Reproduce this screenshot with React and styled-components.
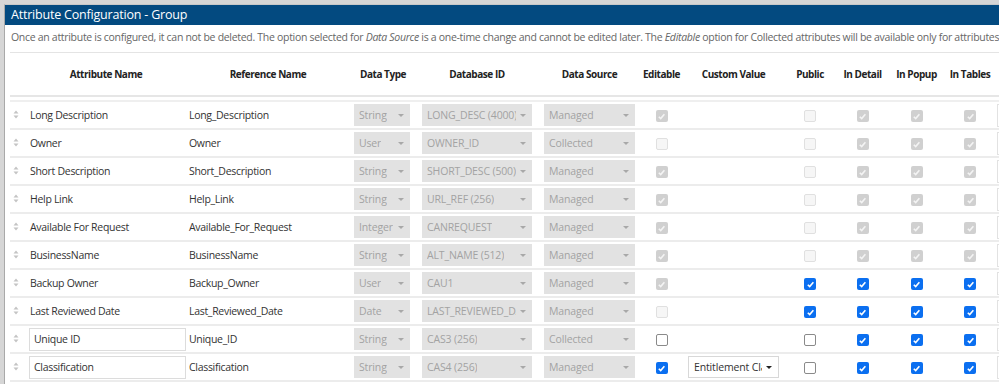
import styled, { createGlobalStyle } from "styled-components";

const GlobalStyle = createGlobalStyle`
    body{
        margin: 0;
        background: #d6d6d6;
        font-family: "Open Sans", "Liberation Sans", sans-serif;
        overflow: hidden;
    }
`

const StyledPanel = styled.section`
    margin: 4px 0 0 4px;
    background: #fff;
    border-left: 1px solid #a9a9a9;
    border-top: 1px solid #c8c8c8;
    height: 380px;
    overflow: hidden;
`

const StyledTitle = styled.h2`
    margin: 0;
    height: 20px;
    line-height: 20px;
    padding: 0 6px;
    background: #034a80;
    color: #fff;
    font-size: 12.5px;
    letter-spacing: -0.2px;
    font-weight: 400;
    white-space: nowrap;
`

const StyledNote = styled.p`
    margin: 0;
    height: 27px;
    line-height: 24px;
    padding: 0 6px;
    color: #666;
    font-size: 10.5px;
    letter-spacing: -0.3px;
    white-space: nowrap;
    em{
        font-style: italic;
    }
`

const StyledTable = styled.table`
    margin-left: 5px;
    border-collapse: collapse;
    table-layout: fixed;
    width: 1072px;
    border-top: 1px solid #e4e4e4;
    color: #333;
    font-size: 10.5px;
    letter-spacing: -0.3px;
`

const StyledTh = styled.th`
    height: 42px;
    font-size: 10px;
    letter-spacing: -0.45px;
    font-weight: 700;
    color: #222;
    text-align: center;
    border-bottom: 2px solid #e6e6e6;
    padding: 0;
    white-space: nowrap;
`

const StyledSpacer = styled.tr`
    height: 5px;
    td{
        padding: 0;
        border-bottom: 2px solid #efefef;
    }
`

const StyledRow = styled.tr`
    td{
        height: 26px;
        border-bottom: 2px solid #ececec;
    }
`

const StyledTd = styled.td`
    padding: ${({ $pad }) => $pad || "0"};
    text-align: ${({ $center }) => ($center ? "center" : "left")};
    vertical-align: middle;
    white-space: nowrap;
    overflow: hidden;
`

const StyledSelect = styled.div`
    display: flex;
    align-items: center;
    justify-content: space-between;
    height: 22px;
    width: ${({ $w }) => $w}px;
    padding: 0 6px 0 5px;
    box-sizing: border-box;
    background: ${({ $active }) => ($active ? "#fff" : "#e2e2e2")};
    border: ${({ $active }) => ($active ? "1px solid #d8d8d8" : "none")};
    color: ${({ $active }) => ($active ? "#333" : "#a3a3a3")};
    letter-spacing: -0.15px;
    span{
        overflow: hidden;
        white-space: nowrap;
    }
    i{
        flex: none;
        width: 0;
        height: 0;
        margin-left: 4px;
        border-left: 3.5px solid transparent;
        border-right: 3.5px solid transparent;
        border-top: 3.5px solid ${({ $active }) => ($active ? "#222" : "#a8a8a8")};
    }
`

const StyledInput = styled.div`
    height: 23px;
    width: 157px;
    box-sizing: border-box;
    border: 1px solid #dcdcdc;
    line-height: 21px;
    padding: 0 4px;
    color: #333;
`

const StyledStub = styled.div`
    height: 23px;
    width: 80px;
    box-sizing: border-box;
    border: 1px solid #e2e2e2;
`

const StyledBox = styled.span`
    display: inline-flex;
    align-items: center;
    justify-content: center;
    vertical-align: middle;
    width: 12px;
    height: 12px;
    box-sizing: border-box;
    border-radius: 2px;
    ${({ $checked, $disabled }) =>
        $checked && $disabled
            ? "background:#d0d0d0;"
            : $checked
            ? "background:#0b6ff0;"
            : $disabled
            ? "background:#f6f6f6;border:1px solid #e0e0e0;"
            : "background:#fff;border:1px solid #8a8a8a;"}
`

const Check = ({ checked, disabled }) => (
    <StyledBox $checked={checked} $disabled={disabled}>
        {checked && (
            <svg width="9" height="9" viewBox="0 0 10 10">
                <path d="M2 5.3 L4.1 7.3 L8.2 2.6" fill="none" stroke={disabled ? "#f4f4f4" : "#fff"} strokeWidth="1.8" />
            </svg>
        )}
    </StyledBox>
)

const Handle = () => (
    <svg width="6" height="9" viewBox="0 0 6 9">
        <path d="M3 0.5 L5.5 3.5 L0.5 3.5 Z M3 8.5 L5.5 5.5 L0.5 5.5 Z" fill="#c4c4c4" />
    </svg>
)

const Select = ({ w, text, active }) => (
    <StyledSelect $w={w} $active={active}>
        <span>{text}</span>
        <i />
    </StyledSelect>
)

const columns = [
    { w: 16, label: "" },
    { w: 160, label: "Attribute Name" },
    { w: 164, label: "Reference Name" },
    { w: 66, label: "Data Type" },
    { w: 122, label: "Database ID" },
    { w: 103, label: "Data Source" },
    { w: 41, label: "Editable" },
    { w: 103, label: "Custom Value" },
    { w: 50, label: "Public" },
    { w: 55, label: "In Detail" },
    { w: 53, label: "In Popup" },
    { w: 54, label: "In Tables" },
    { w: 86, label: "" },
]

const D = { checked: true, disabled: true }
const E = { checked: false, disabled: true }
const C = { checked: true, disabled: false }
const U = { checked: false, disabled: false }

const rows = [
    { name: "Long Description", ref: "Long_Description", type: "String", db: "LONG_DESC (4000)", src: "Managed", editable: D, flags: [E, D, D, D] },
    { name: "Owner", ref: "Owner", type: "User", db: "OWNER_ID", src: "Collected", editable: E, flags: [E, D, D, D] },
    { name: "Short Description", ref: "Short_Description", type: "String", db: "SHORT_DESC (500)", src: "Managed", editable: D, flags: [E, D, D, D] },
    { name: "Help Link", ref: "Help_Link", type: "String", db: "URL_REF (256)", src: "Managed", editable: D, flags: [E, D, D, D] },
    { name: "Available For Request", ref: "Available_For_Request", type: "Integer", db: "CANREQUEST", src: "Managed", editable: D, flags: [E, D, D, D] },
    { name: "BusinessName", ref: "BusinessName", type: "String", db: "ALT_NAME (512)", src: "Managed", editable: D, flags: [E, D, D, D] },
    { name: "Backup Owner", ref: "Backup_Owner", type: "User", db: "CAU1", src: "Managed", editable: D, flags: [C, C, C, C] },
    { name: "Last Reviewed Date", ref: "Last_Reviewed_Date", type: "Date", db: "LAST_REVIEWED_DATE", src: "Managed", editable: E, flags: [C, C, C, C] },
    { name: "Unique ID", ref: "Unique_ID", type: "String", db: "CAS3 (256)", src: "Collected", editable: U, flags: [U, C, C, C], input: true },
    { name: "Classification", ref: "Classification", type: "String", db: "CAS4 (256)", src: "Managed", editable: C, flags: [U, C, C, C], input: true, custom: "Entitlement Classification" },
]

const App = () => {
    return (
        <>
            <GlobalStyle />
            <StyledPanel>
                <StyledTitle>Attribute Configuration - Group</StyledTitle>
                <StyledNote>
                    Once an attribute is configured, it can not be deleted. The option selected for <em>Data Source</em> is a one-time change and cannot be edited later. The <em>Editable</em> option for Collected attributes will be available only for attributes that are configured.
                </StyledNote>
                <StyledTable>
                    <colgroup>
                        {columns.map((col, i) => (
                            <col key={i} style={{ width: col.w }} />
                        ))}
                    </colgroup>
                    <thead>
                        <tr>
                            {columns.map((col, i) => (
                                <StyledTh key={i}>{col.label}</StyledTh>
                            ))}
                        </tr>
                    </thead>
                    <tbody>
                        <StyledSpacer>
                            <td colSpan={13} />
                        </StyledSpacer>
                        {rows.map((row) => (
                            <StyledRow key={row.ref}>
                                <StyledTd $pad="0 0 0 3px"><Handle /></StyledTd>
                                <StyledTd $pad={row.input ? "0 0 0 3px" : "0 0 0 4px"}>
                                    {row.input ? <StyledInput>{row.name}</StyledInput> : row.name}
                                </StyledTd>
                                <StyledTd $pad="0 0 0 3px">{row.ref}</StyledTd>
                                <StyledTd $pad="0 0 0 4px"><Select w={56} text={row.type} /></StyledTd>
                                <StyledTd $pad="0 0 0 6px"><Select w={110} text={row.db} /></StyledTd>
                                <StyledTd $pad="0 0 0 6px"><Select w={91} text={row.src} /></StyledTd>
                                <StyledTd $center><Check {...row.editable} /></StyledTd>
                                <StyledTd $pad="0 0 0 6px">
                                    {row.custom && <Select w={91} text={row.custom} active />}
                                </StyledTd>
                                {row.flags.map((f, i) => (
                                    <StyledTd key={i} $center><Check {...f} /></StyledTd>
                                ))}
                                <StyledTd><StyledStub /></StyledTd>
                            </StyledRow>
                        ))}
                    </tbody>
                </StyledTable>
            </StyledPanel>
        </>
    )
}

export default App;
